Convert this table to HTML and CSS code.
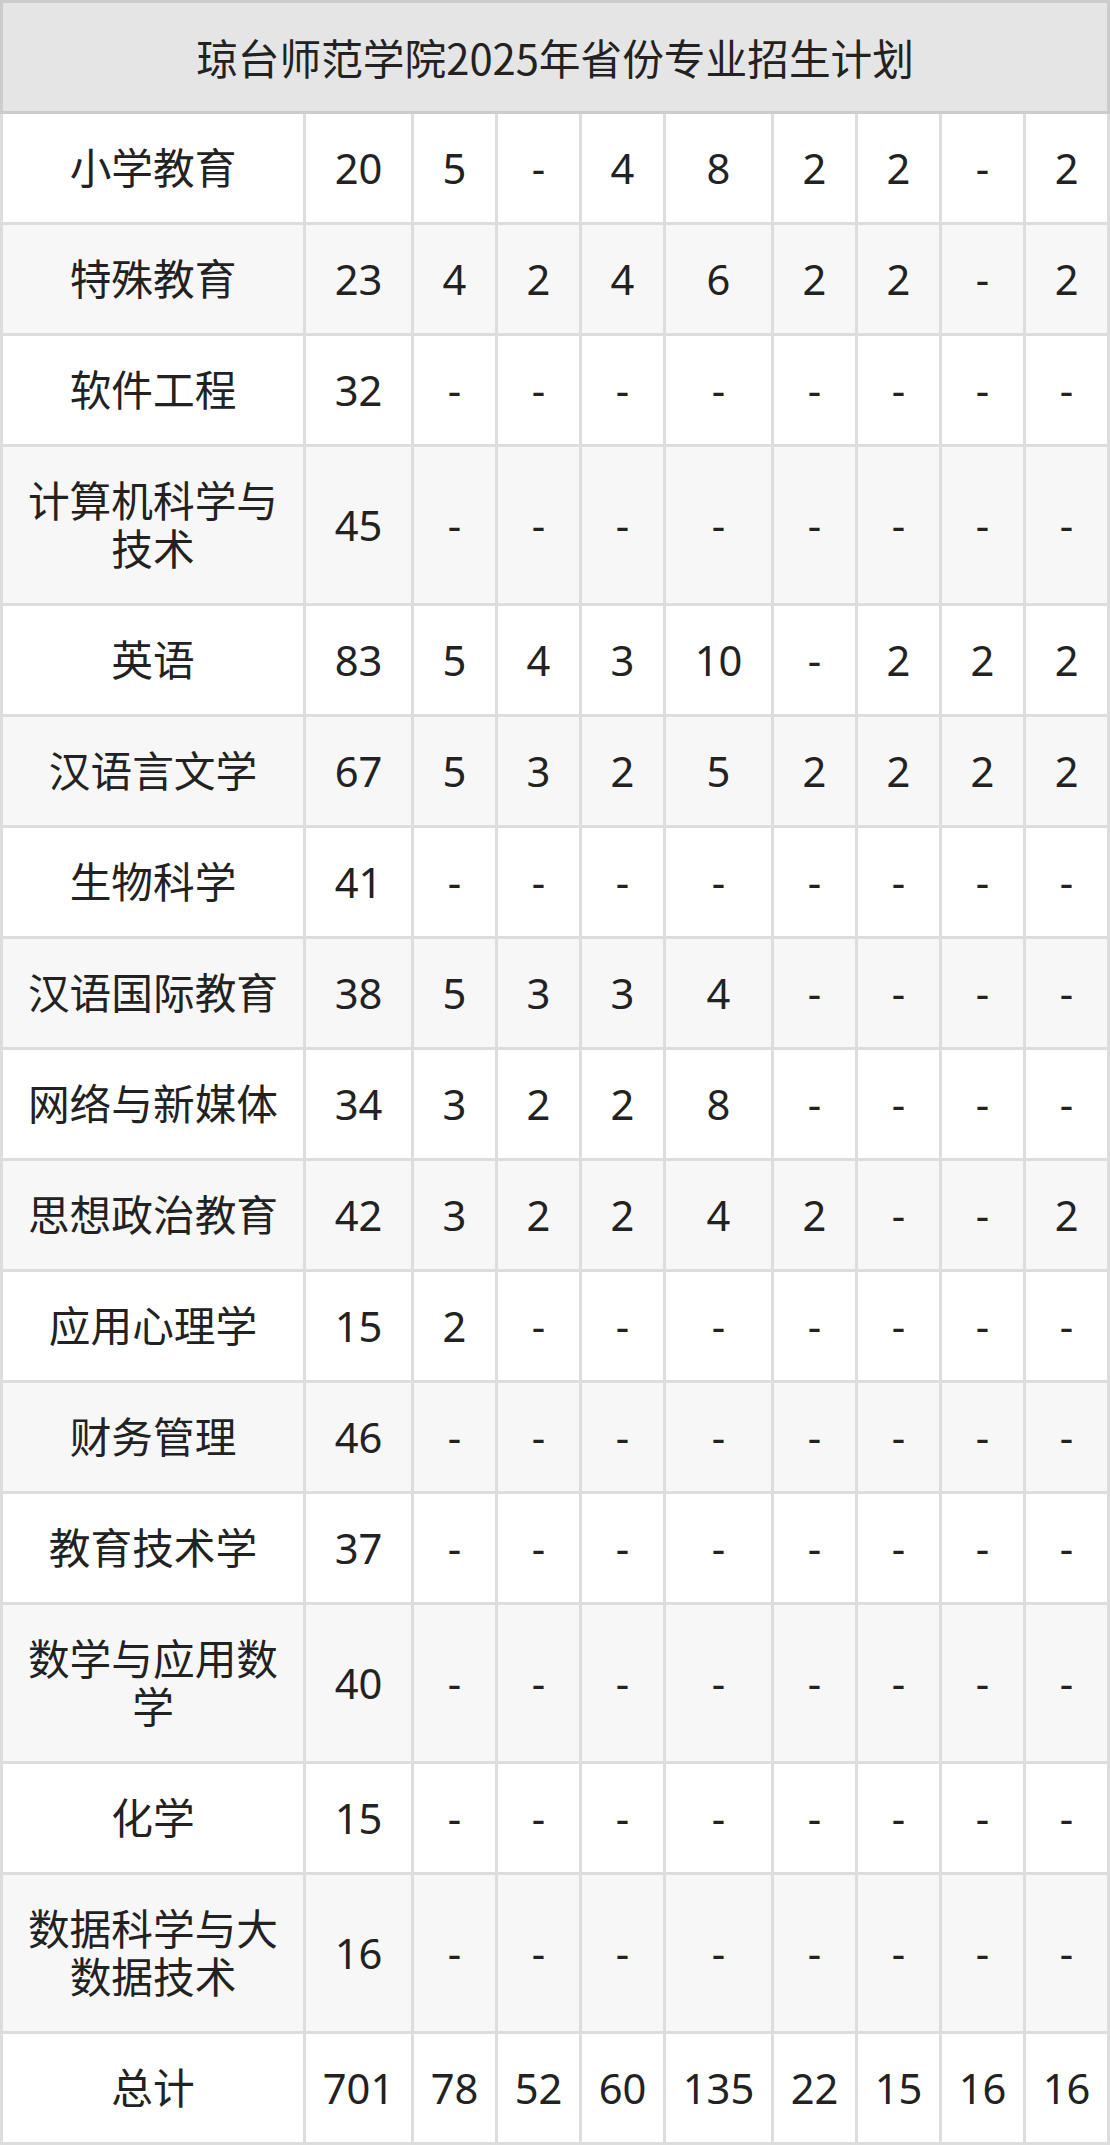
FILE: index.html
```html
<!DOCTYPE html>
<html lang="zh-CN">
<head>
<meta charset="utf-8">
<title>琼台师范学院2025年省份专业招生计划</title>
<link rel="stylesheet" href="styles.css">
</head>
<body>
<table class="plan">
  <colgroup>
    <col class="c-name">
    <col class="c-wide">
    <col class="c-n">
    <col class="c-n">
    <col class="c-n">
    <col class="c-wide">
    <col class="c-n">
    <col class="c-n">
    <col class="c-n">
    <col class="c-n">
  </colgroup>
  <thead>
    <tr><th colspan="10">琼台师范学院2025年省份专业招生计划</th></tr>
  </thead>
  <tbody>
    <tr><td>小学教育</td><td>20</td><td>5</td><td>-</td><td>4</td><td>8</td><td>2</td><td>2</td><td>-</td><td>2</td></tr>
    <tr><td>特殊教育</td><td>23</td><td>4</td><td>2</td><td>4</td><td>6</td><td>2</td><td>2</td><td>-</td><td>2</td></tr>
    <tr><td>软件工程</td><td>32</td><td>-</td><td>-</td><td>-</td><td>-</td><td>-</td><td>-</td><td>-</td><td>-</td></tr>
    <tr><td>计算机科学与技术</td><td>45</td><td>-</td><td>-</td><td>-</td><td>-</td><td>-</td><td>-</td><td>-</td><td>-</td></tr>
    <tr><td>英语</td><td>83</td><td>5</td><td>4</td><td>3</td><td>10</td><td>-</td><td>2</td><td>2</td><td>2</td></tr>
    <tr><td>汉语言文学</td><td>67</td><td>5</td><td>3</td><td>2</td><td>5</td><td>2</td><td>2</td><td>2</td><td>2</td></tr>
    <tr><td>生物科学</td><td>41</td><td>-</td><td>-</td><td>-</td><td>-</td><td>-</td><td>-</td><td>-</td><td>-</td></tr>
    <tr><td>汉语国际教育</td><td>38</td><td>5</td><td>3</td><td>3</td><td>4</td><td>-</td><td>-</td><td>-</td><td>-</td></tr>
    <tr><td>网络与新媒体</td><td>34</td><td>3</td><td>2</td><td>2</td><td>8</td><td>-</td><td>-</td><td>-</td><td>-</td></tr>
    <tr><td>思想政治教育</td><td>42</td><td>3</td><td>2</td><td>2</td><td>4</td><td>2</td><td>-</td><td>-</td><td>2</td></tr>
    <tr><td>应用心理学</td><td>15</td><td>2</td><td>-</td><td>-</td><td>-</td><td>-</td><td>-</td><td>-</td><td>-</td></tr>
    <tr><td>财务管理</td><td>46</td><td>-</td><td>-</td><td>-</td><td>-</td><td>-</td><td>-</td><td>-</td><td>-</td></tr>
    <tr><td>教育技术学</td><td>37</td><td>-</td><td>-</td><td>-</td><td>-</td><td>-</td><td>-</td><td>-</td><td>-</td></tr>
    <tr><td>数学与应用数学</td><td>40</td><td>-</td><td>-</td><td>-</td><td>-</td><td>-</td><td>-</td><td>-</td><td>-</td></tr>
    <tr><td>化学</td><td>15</td><td>-</td><td>-</td><td>-</td><td>-</td><td>-</td><td>-</td><td>-</td><td>-</td></tr>
    <tr><td>数据科学与大数据技术</td><td>16</td><td>-</td><td>-</td><td>-</td><td>-</td><td>-</td><td>-</td><td>-</td><td>-</td></tr>
    <tr><td>总计</td><td>701</td><td>78</td><td>52</td><td>60</td><td>135</td><td>22</td><td>15</td><td>16</td><td>16</td></tr>
  </tbody>
</table>
</body>
</html>
```
FILE: styles.css
```css
html, body {
  margin: 0;
  padding: 0;
  background: #ffffff;
}

body {
  font-family: "Noto Sans", "Noto Sans CJK SC", sans-serif;
  color: #222222;
}

.plan {
  width: 1110px;
  table-layout: fixed;
  border-collapse: separate;
  border-spacing: 0;
  font-size: 41.7px;
  line-height: 48px;
}

.c-name { width: 306px; }
.c-wide { width: 108px; }
.c-n { width: 84px; }

.plan th {
  font-family: "Noto Sans CJK SC", sans-serif;
  font-size: 41.7px;
  font-weight: 400;
  background: #e5e5e5;
  border: 3px solid #cccccc;
  padding: 30px 0;
  text-align: center;
  vertical-align: middle;
}

.plan td {
  box-sizing: border-box;
  padding: 30px 0;
  text-align: center;
  vertical-align: middle;
  border-right: 3px solid #dddddd;
  border-bottom: 3px solid #dddddd;
  background: #ffffff;
  white-space: normal;
}

.plan td:first-child {
  border-left: 3px solid #dddddd;
  padding: 30px 18px;
}

.plan tbody tr:nth-child(even) td {
  background: #f7f7f7;
}
```
